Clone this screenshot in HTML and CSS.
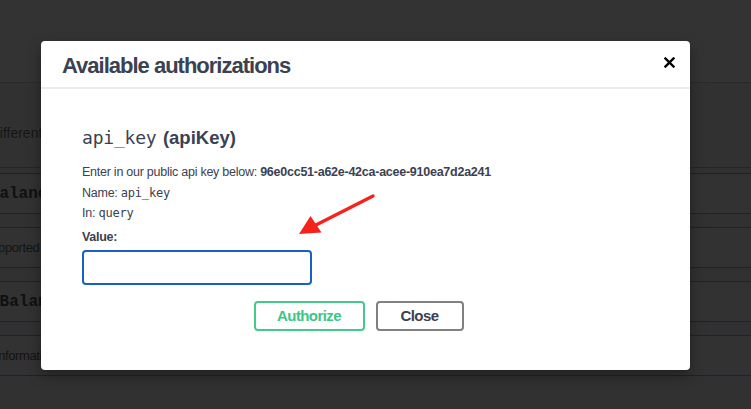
FILE: index.html
```html
<!DOCTYPE html>
<html>
<head>
<meta charset="utf-8">
<link rel="stylesheet" href="styles.css">
</head>
<body>
<div class="page">
  <div class="topbar"></div>
  <div class="content">
    <p class="intro">different currencies and balances information for your account</p>
    <div class="divider"></div>
    <div class="row"><span class="op">getbalance summary</span></div>
    <div class="row"><span class="desc">Supported Platforms list</span></div>
    <div class="row"><span class="op op2">/Balance summary</span></div>
    <div class="row"><span class="desc desc2">Information about account</span></div>
  </div>

  <div class="modal">
    <div class="modal-header">
      <h3 class="modal-title">Available authorizations</h3>
      <button class="close-x" type="button" aria-label="close">
        <svg width="11" height="11" viewBox="0 0 11 11"><path d="M1.5 1.5 L9.5 9.5 M9.5 1.5 L1.5 9.5" stroke="#000" stroke-width="2.4" stroke-linecap="square"/></svg>
      </button>
    </div>
    <div class="modal-body">
      <h4 class="auth-name"><code>api_key</code> <span class="auth-type">(apiKey)</span></h4>
      <p class="line">Enter in our public api key below: <b>96e0cc51-a62e-42ca-acee-910ea7d2a241</b></p>
      <p class="line">Name: <code>api_key</code></p>
      <p class="line">In: <code>query</code></p>
      <label class="value-label">Value:</label>
      <div class="input"></div>
      <div class="btns">
        <button class="btn authorize" type="button">Authorize</button>
        <button class="btn close" type="button">Close</button>
      </div>
    </div>
    <svg class="arrow" width="90" height="60" viewBox="0 0 90 60">
      <line x1="81" y1="15" x2="20" y2="46" stroke="#f5231b" stroke-width="3.4" stroke-linecap="round"/>
      <polygon points="7,53 18.5,35 29.5,51.5" fill="#f5231b"/>
    </svg>
  </div>
</div>
</body>
</html>
```
FILE: styles.css
```css
html, body {
  margin: 0;
  padding: 0;
}
body {
  background: #313131;
  font-family: "Liberation Sans", Arial, sans-serif;
  color: #3b4151;
  width: 751px;
  height: 409px;
  overflow: hidden;
}
.page {
  position: relative;
  width: 751px;
  height: 409px;
}
.topbar {
  height: 82px;
  background: #333333;
  border-bottom: 1px solid #2a2a2a;
}
.content {
  display: flex;
  flex-direction: column;
}
.intro {
  margin: 0;
  height: 84px;
  line-height: 100px;
  font-size: 14px;
  color: #161616;
  white-space: nowrap;
  margin-left: -8px;
}
.divider {
  height: 1px;
  background: #262626;
  margin-bottom: 5px;
}
.row {
  height: 39px;
  border-top: 1px solid #142436;
  border-bottom: 1px solid #142436;
  background: #323232;
  margin-bottom: 13px;
  display: flex;
  align-items: center;
  white-space: nowrap;
  overflow: hidden;
}
.op {
  font-family: "Liberation Mono", monospace;
  font-weight: bold;
  font-size: 16px;
  color: #101010;
  margin-left: -39px;
}
.op2 {
  margin-left: -10px;
}
.desc {
  font-size: 13px;
  letter-spacing: -0.4px;
  color: #141414;
  margin-left: -17px;
}
.desc2 {
  margin-left: -5px;
}

.modal {
  position: absolute;
  left: 41px;
  top: 41px;
  width: 649px;
  height: 329px;
  background: #fff;
  border-radius: 4px;
  box-shadow: 0 6px 14px rgba(0,0,0,.35);
}
.modal-header {
  height: 46px;
  border-bottom: 2px solid #ececec;
  display: flex;
  align-items: center;
  justify-content: space-between;
  padding: 0 14px 0 21px;
}
.modal-title {
  margin: 0;
  font-size: 22px;
  letter-spacing: -1px;
  font-weight: bold;
  color: #3b4151;
  padding-top: 4px;
}
.close-x {
  border: 0;
  background: none;
  padding: 0;
  width: 14px;
  height: 14px;
  display: flex;
  align-items: center;
  justify-content: center;
  margin-top: -4px;
}
.modal-body {
  padding: 37px 41px 0 41px;
}
.auth-name {
  margin: 0 0 11px 0;
  font-weight: normal;
  line-height: 24px;
}
.auth-name code {
  font-family: "DejaVu Sans Mono", monospace;
  font-size: 18px;
  color: #3b4151;
  letter-spacing: -0.2px;
}
.auth-type {
  font-weight: bold;
  font-size: 18.5px;
  letter-spacing: 0;
  margin-left: 2px;
}
.line {
  margin: 0;
  font-size: 12.5px;
  letter-spacing: -0.25px;
  line-height: 20.5px;
  color: #3b4151;
}
.line b {
  font-weight: bold;
}
.line code {
  font-family: "DejaVu Sans Mono", monospace;
  font-size: 12px;
  letter-spacing: -0.2px;
}
.value-label {
  display: block;
  margin-top: 3px;
  font-size: 12.5px;
  letter-spacing: -0.3px;
  font-weight: bold;
  line-height: 20px;
}
.input {
  width: 226px;
  height: 31px;
  border: 2px solid #1a5fc9;
  border-radius: 4px;
  margin-top: 3px;
}
.btns {
  display: flex;
  justify-content: center;
  gap: 11px;
  margin-top: 16px;
  padding-right: 14px;
}
.btn {
  height: 30px;
  background: #fff;
  border-radius: 4px;
  font-family: "Liberation Sans", Arial, sans-serif;
  font-weight: bold;
  font-size: 15px;
  letter-spacing: -0.6px;
  padding: 0;
}
.authorize {
  width: 111px;
  border: 2px solid #44c98c;
  color: #3ec488;
}
.close {
  width: 88px;
  border: 2px solid #808080;
  color: #3b4151;
}
.arrow {
  position: absolute;
  left: 251px;
  top: 140px;
}
```
